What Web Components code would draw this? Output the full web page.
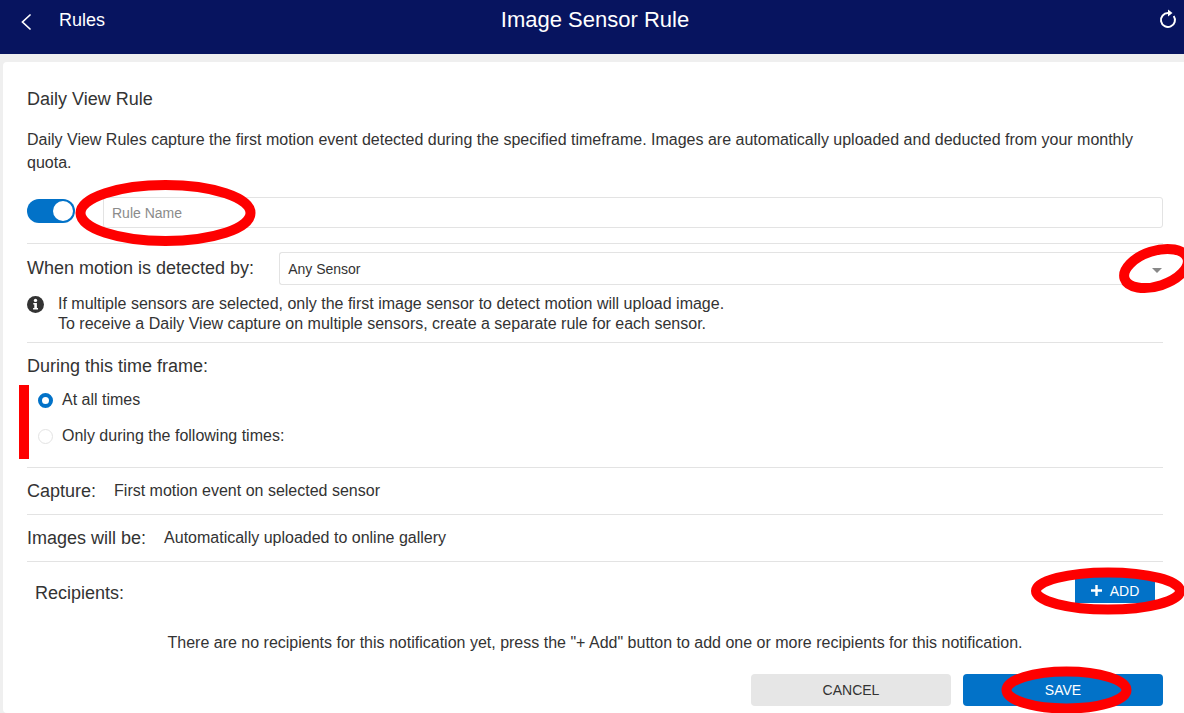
<!DOCTYPE html>
<html>
<head>
<meta charset="utf-8">
<title>Image Sensor Rule</title>
<style>
  html, body { margin: 0; height: 713px; overflow: hidden; }
  body {
    position: relative;
    background: #efefef;
    font-family: "Liberation Sans", Arial, sans-serif;
    color: #333333;
  }
</style>
</head>
<body>
<app-header title="Image Sensor Rule" back="Rules"></app-header>
<rule-card>
  <h-title>Daily View Rule</h-title>
  <p-text>Daily View Rules capture the first motion event detected during the specified timeframe. Images are automatically uploaded and deducted from your monthly quota.</p-text>
  <name-row></name-row>
  <sensor-row></sensor-row>
  <time-frame></time-frame>
  <info-row label="Capture:" value="First motion event on selected sensor"></info-row>
  <info-row label="Images will be:" value="Automatically uploaded to online gallery"></info-row>
  <recipients-block></recipients-block>
  <form-actions></form-actions>
</rule-card>
<red-marks></red-marks>

<script>
  // small helper, every element just sets its shadow html once
  class Base extends HTMLElement {
    constructor() {
      super();
      this.attachShadow({ mode: 'open' });
    }
    connectedCallback() {
      this.shadowRoot.innerHTML = this.render();
    }
  }

  class AppHeader extends Base {
    render() {
      return `
      <style>
        :host { display: block; height: 54px; background: #07145f; color: #fff; }
        .bar { display: grid; grid-template-columns: 1fr auto 1fr; height: 40px; align-items: center; padding: 0 7px 0 21px; }
        .left { display: flex; align-items: center; gap: 27px; font-size: 18px; }
        .left svg { margin-top: 3px; }
        .title { font-size: 22px; margin-left: -8px; }
        .right { display: flex; justify-content: flex-end; }
        svg { display: block; }
      </style>
      <div class="bar">
        <div class="left">
          <svg width="11" height="16" viewBox="0 0 11 16" fill="none" stroke="#fff" stroke-width="1.7" stroke-linecap="round"><path d="M9 1 L1.500 8 L9 15"/></svg>
          <span>${this.getAttribute('back')}</span>
        </div>
        <div class="title">${this.getAttribute('title')}</div>
        <div class="right">
          <svg width="18" height="22" viewBox="0 -2 18 22" fill="none" stroke="#fff" stroke-width="2"><path d="M14.700 5 A7 7 0 1 1 9 2"/><path d="M9 -1.500 L13.500 2 L9 5.500 Z" fill="#fff" stroke="none"/></svg>
        </div>
      </div>`;
    }
  }

  class RuleCard extends Base {
    render() {
      return `
      <style>
        :host { display: block; margin: 8px 0 0 3px; height: 651px; box-sizing: border-box; padding: 27px 21px 0 24px; background: #fff; border-radius: 4px 0 0 4px; }
      </style>
      <slot></slot>`;
    }
  }

  class HTitle extends Base {
    render() {
      return `
      <style>:host { display: block; font-size: 18px; line-height: 20px; color: #333; }</style>
      <slot></slot>`;
    }
  }

  class PText extends Base {
    render() {
      return `
      <style>:host { display: block; margin-top: 19px; font-size: 16px; line-height: 23px; color: #333; }</style>
      <slot></slot>`;
    }
  }

  class NameRow extends Base {
    render() {
      return `
      <style>
        :host { display: flex; align-items: center; gap: 28px; margin-top: 24px; height: 46px; box-sizing: border-box; padding-bottom: 15px; border-bottom: 1px solid #e3e3e3; }
        .toggle { position: relative; flex: none; width: 48px; height: 24px; margin-bottom: 4px; border-radius: 12px; background: #0272c8; }
        .toggle i { position: absolute; right: 2px; top: 2px; width: 20px; height: 20px; border-radius: 50%; background: #fff; }
        input { flex: 1; height: 31px; margin-bottom: 1px; box-sizing: border-box; border: 1px solid #e3e3e3; border-radius: 3px; padding: 0 8px; font: 14px "Liberation Sans", Arial, sans-serif; outline: none; }
        input::placeholder { color: #8b8b8b; opacity: 1; }
      </style>
      <div class="toggle"><i></i></div>
      <input placeholder="Rule Name">`;
    }
  }

  class SensorRow extends Base {
    render() {
      return `
      <style>
        :host { display: block; padding-top: 8px; height: 99px; box-sizing: border-box; border-bottom: 1px solid #e3e3e3; }
        .top { display: flex; align-items: center; gap: 25px; }
        label { font-size: 18px; white-space: nowrap; }
        .select { position: relative; flex: 1; height: 33px; box-sizing: border-box; border: 1px solid #e3e3e3; border-right: 0; border-radius: 3px 0 0 3px; padding-left: 8px; font-size: 14px; line-height: 33px; color: #333; }
        .arrow { position: absolute; right: 1px; top: 15px; width: 0; height: 0; border: 5px solid transparent; border-top: 5px solid #888; border-bottom: 0; }
        .note { display: flex; gap: 14px; margin-top: 9px; font-size: 16px; line-height: 20px; }
        svg { flex: none; margin-top: 2px; }
      </style>
      <div class="top">
        <label>When motion is detected by:</label>
        <div class="select">Any Sensor<span class="arrow"></span></div>
      </div>
      <div class="note">
        <svg width="17" height="17" viewBox="0 0 17 17"><circle cx="8.5" cy="8.5" r="8.5" fill="#333"/><circle cx="8.5" cy="4.4" r="1.7" fill="#fff"/><path d="M6.3 7 H9.9 V12 H11 V13.6 H6.1 V12 H7.3 V8.6 H6.3 Z" fill="#fff"/></svg>
        <div>If multiple sensors are selected, only the first image sensor to detect motion will upload image.<br>To receive a Daily View capture on multiple sensors, create a separate rule for each sensor.</div>
      </div>`;
    }
  }

  class TimeFrame extends Base {
    render() {
      return `
      <style>
        :host { display: block; height: 125px; box-sizing: border-box; padding-top: 14px; border-bottom: 1px solid #e3e3e3; position: relative; }
        .head { font-size: 18px; line-height: 19px; }
        .opts { margin-top: 14px; display: flex; flex-direction: column; gap: 16px; padding-left: 11px; }
        .opt { display: flex; align-items: center; gap: 9px; height: 20px; font-size: 16px; }
        .dot { width: 15px; height: 15px; box-sizing: border-box; border-radius: 50%; border: 1px solid #e3e3e3; background: #fff; }
        .dot.on { border: 4.5px solid #0272c8; }
        .bar { position: absolute; left: -8px; top: 42px; width: 10px; height: 74px; background: #fe0000; }
      </style>
      <div class="head">During this time frame:</div>
      <div class="opts">
        <div class="opt"><span class="dot on"></span>At all times</div>
        <div class="opt"><span class="dot"></span>Only during the following times:</div>
      </div>
      <div class="bar"></div>`;
    }
  }

  class InfoRow extends Base {
    render() {
      return `
      <style>
        :host { display: flex; align-items: center; gap: 18px; height: 47px; box-sizing: border-box; border-bottom: 1px solid #e3e3e3; }
        b { font-weight: normal; font-size: 18px; }
        span { font-size: 16px; }
      </style>
      <b>${this.getAttribute('label')}</b><span>${this.getAttribute('value')}</span>`;
    }
  }

  class RecipientsBlock extends Base {
    render() {
      return `
      <style>
        :host { display: block; }
        .head { display: flex; justify-content: space-between; align-items: center; height: 26px; margin-top: 15px; padding: 0 8px; font-size: 18px; }
        .head span { padding-top: 7px; }
        .add { display: flex; align-items: center; justify-content: center; gap: 8px; width: 80px; height: 26px; padding-top: 1px; box-sizing: border-box; background: #0272c8; color: #fff; font-size: 14px; }
        .empty { margin-top: 30px; text-align: center; font-size: 16px; line-height: 20px; }
      </style>
      <div class="head">
        <span>Recipients:</span>
        <div class="add"><svg width="11" height="11" viewBox="0 0 11 11"><path d="M4.3 0 H6.7 V4.3 H11 V6.7 H6.7 V11 H4.3 V6.7 H0 V4.3 H4.3 Z" fill="#fff"/></svg>ADD</div>
      </div>
      <div class="empty">There are no recipients for this notification yet, press the "+ Add" button to add one or more recipients for this notification.</div>`;
    }
  }

  class FormActions extends Base {
    render() {
      return `
      <style>
        :host { display: flex; justify-content: flex-end; gap: 12px; margin-top: 21px; }
        button { width: 200px; height: 32px; border: 0; border-radius: 4px; font: 14px "Liberation Sans", Arial, sans-serif; padding: 0; }
        .cancel { background: #e6e6e6; color: #333; }
        .save { background: #0272c8; color: #fff; }
      </style>
      <button class="cancel">CANCEL</button>
      <button class="save">SAVE</button>`;
    }
  }

  // the red hand-drawn marks lie over the page
  class RedMarks extends Base {
    render() {
      return `
      <style>
        :host { position: absolute; left: 0; top: 0; width: 1184px; height: 713px; pointer-events: none; }
        svg { display: block; }
      </style>
      <svg width="1184" height="713" fill="none" stroke="#fe0000" stroke-width="10">
        <ellipse cx="165.500" cy="213" rx="85" ry="28"/>
        <ellipse cx="1156" cy="268.500" rx="33" ry="17.500" transform="rotate(-18 1156 268.500)"/>
        <ellipse cx="1108" cy="591" rx="72" ry="18.500"/>
        <ellipse cx="1066.500" cy="690" rx="60" ry="18.500"/>
      </svg>`;
    }
  }

  customElements.define('app-header', AppHeader);
  customElements.define('rule-card', RuleCard);
  customElements.define('h-title', HTitle);
  customElements.define('p-text', PText);
  customElements.define('name-row', NameRow);
  customElements.define('sensor-row', SensorRow);
  customElements.define('time-frame', TimeFrame);
  customElements.define('info-row', InfoRow);
  customElements.define('recipients-block', RecipientsBlock);
  customElements.define('form-actions', FormActions);
  customElements.define('red-marks', RedMarks);
</script>
</body>
</html>
